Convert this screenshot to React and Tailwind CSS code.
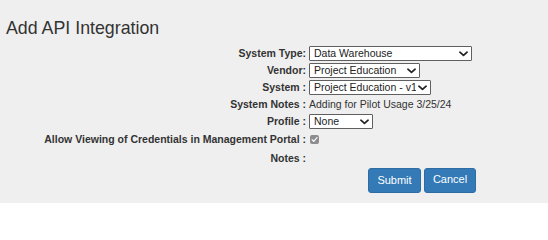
import { useState } from 'react';

function Chevron() {
  return (
    <svg viewBox="0 0 10 6" className="w-[9px] h-[6px]" fill="none">
      <path d="M1 1l4 3.6L9 1" stroke="#222" strokeWidth="1.9" strokeLinecap="round" strokeLinejoin="round" />
    </svg>
  );
}

function Select({ value, options, width, onChange }) {
  return (
    <div className={`relative h-[15px] ${width}`}>
      <select
        value={value}
        onChange={(e) => onChange(e.target.value)}
        className="block appearance-none w-full h-[15px] bg-white border border-[#5f5f5f] rounded-[1px] pl-[4px] pr-[14px] py-0 text-[10.5px] leading-[13px] text-[#222] outline-none"
      >
        {options.map((o) => (
          <option key={o}>{o}</option>
        ))}
      </select>
      <span className="pointer-events-none absolute right-[4px] top-[5px] flex">
        <Chevron />
      </span>
    </div>
  );
}

function Row({ label, children, className = 'h-[17px]' }) {
  return (
    <div className={`grid grid-cols-[309px_1fr] items-center ${className}`}>
      <div className="text-right pr-[3px] font-bold text-[10.5px] text-[#333] whitespace-nowrap">{label}</div>
      <div className="flex items-center">{children}</div>
    </div>
  );
}

export default function App() {
  const [form, setForm] = useState({
    systemType: 'Data Warehouse',
    vendor: 'Project Education',
    system: 'Project Education - v1',
    profile: 'None'
  });

  const set = (key) => (v) => setForm({ ...form, [key]: v });

  return (
    <div className="w-[548px] h-[203px] bg-[#efefef] overflow-hidden" style={{ fontFamily: '"Liberation Sans", Arial, sans-serif' }}>
      <h1 className="pl-[6px] pt-[18px] text-[17.8px] leading-[20px] text-[#333] font-normal">Add API Integration</h1>

      <form onSubmit={(e) => e.preventDefault()} className="mt-[7px]">
        <Row label="System Type:">
          <Select value={form.systemType} onChange={set('systemType')} width="w-[163px]" options={['Data Warehouse', 'Student Information', 'Learning Management']} />
        </Row>
        <Row label="Vendor:">
          <Select value={form.vendor} onChange={set('vendor')} width="w-[111px]" options={['Project Education']} />
        </Row>
        <Row label="System :">
          <Select value={form.system} onChange={set('system')} width="w-[122px]" options={['Project Education - v1']} />
        </Row>
        <Row label="System Notes :">
          <span className="text-[10.5px] text-[#333]">Adding for Pilot Usage 3/25/24</span>
        </Row>
        <Row label="Profile :">
          <Select value={form.profile} onChange={set('profile')} width="w-[64px]" options={['None']} />
        </Row>
        <Row label="Allow Viewing of Credentials in Management Portal :" className="h-[19px]">
          <span className="ml-[1px] w-[9px] h-[9px] rounded-[2px] bg-[#8d8d8d] flex items-center justify-center">
            <svg viewBox="0 0 10 10" className="w-[7px] h-[7px]" fill="none">
              <path d="M1.5 5.2l2.4 2.4L8.6 2.2" stroke="#fff" strokeWidth="1.6" strokeLinecap="round" strokeLinejoin="round" />
            </svg>
          </span>
        </Row>
        <Row label="Notes :" className="h-[19px]">
          <span />
        </Row>

        <div className="flex gap-[3px] pl-[368px]">
          <button type="submit" className="w-[53px] h-[25px] rounded-[3px] bg-[#337ab7] border border-[#2e6da4] text-white text-[11px]">
            Submit
          </button>
          <button type="button" className="w-[52px] h-[25px] rounded-[3px] bg-[#337ab7] border border-[#2e6da4] text-white text-[11px] pb-[3px]">
            Cancel
          </button>
        </div>
      </form>
    </div>
  );
}
